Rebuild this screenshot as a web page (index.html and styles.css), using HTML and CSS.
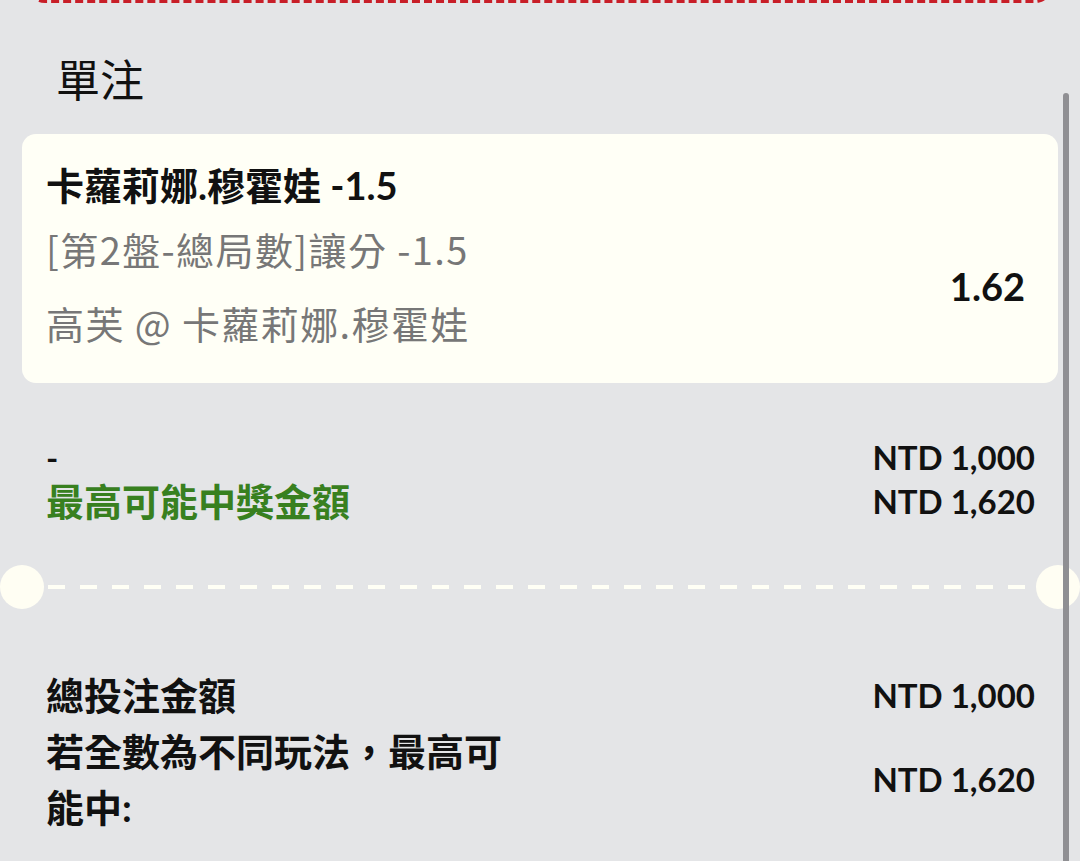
FILE: index.html
```html
<!DOCTYPE html>
<html lang="zh-Hant">
<head>
  <meta charset="UTF-8" />
  <meta name="viewport" content="width=device-width, initial-scale=1.0"/>
  <title>單注</title>
  <link rel="stylesheet" href="styles.css">
</head>
<body>
  <div class="prev-slip"></div>

  <h2 class="section-title">單注</h2>

  <div class="bet-card">
    <div class="bet-name">卡蘿莉娜.穆霍娃 -1.5</div>
    <div class="bet-body">
      <div class="bet-info">
        <div class="bet-market">[第2盤-總局數]讓分 -1.5</div>
        <div class="bet-match">高芙 @ 卡蘿莉娜.穆霍娃</div>
      </div>
      <div class="bet-odds">1.62</div>
    </div>
  </div>

  <div class="stake">
    <div class="row">
      <span class="stake-input">-</span>
      <span class="amount">NTD 1,000</span>
    </div>
    <div class="row">
      <span class="win-label">最高可能中獎金額</span>
      <span class="amount">NTD 1,620</span>
    </div>
  </div>

  <div class="divider">
    <span class="notch"></span>
    <span class="dash-line"></span>
    <span class="notch"></span>
  </div>

  <div class="summary">
    <div class="sum-label">總投注金額</div>
    <div class="amount">NTD 1,000</div>
    <div class="sum-label">若全數為不同玩法，最高可能中:</div>
    <div class="amount">NTD 1,620</div>
  </div>

  <div class="scrollbar"></div>
</body>
</html>
```

FILE: styles.css
```css
body {
  font-family: 'Lato', 'Noto Sans CJK TC', sans-serif;
  background-color: #e4e5e7;
  color: #111;
  margin: 0;
  padding: 0;
  overflow: hidden;
}

.prev-slip {
  height: 36px;
  margin: -37px 27px 0;
  border: 4px dashed #c81e28;
  border-top: none;
  border-radius: 0 0 18px 18px;
}

.section-title {
  font-family: 'Noto Sans CJK TC', sans-serif;
  font-size: 44px;
  font-weight: 400;
  line-height: 56px;
  margin: 47px 0 28px;
  padding-left: 56px;
}

.bet-card {
  margin: 0 22px;
  padding: 25px 33px 34px 24px;
  background-color: #fffff6;
  border-radius: 14px;
}

.bet-name {
  font-size: 38px;
  font-weight: bold;
  line-height: 52px;
  margin-bottom: 12px;
}

.bet-body {
  display: flex;
  align-items: center;
  justify-content: space-between;
}

.bet-market, .bet-match {
  font-family: 'Noto Sans CJK TC', sans-serif;
  font-size: 38px;
  line-height: 52px;
  letter-spacing: 1.4px;
  color: #777;
}

.bet-market {
  margin-bottom: 22px;
}

.bet-odds {
  font-size: 38px;
  font-weight: bold;
}

.stake {
  margin-top: 52px;
  padding: 0 45px 0 46px;
}

.row {
  display: flex;
  justify-content: space-between;
  align-items: center;
  line-height: 44px;
}

.stake-input {
  font-size: 33px;
  font-weight: bold;
}

.win-label {
  font-size: 38px;
  font-weight: bold;
  color: #38801f;
}

.amount {
  font-size: 33px;
  font-weight: bold;
}

.divider {
  display: flex;
  align-items: center;
  margin-top: 42px;
}

.notch {
  width: 44px;
  height: 44px;
  border-radius: 50%;
  background-color: #fffef3;
  flex-shrink: 0;
}

.dash-line {
  flex: 1;
  height: 4px;
  margin: 0 4px;
  background: repeating-linear-gradient(90deg, #fffff5 0 17px, transparent 17px 32px);
}

.summary {
  display: grid;
  grid-template-columns: 1fr auto;
  align-items: center;
  margin-top: 58px;
  padding: 0 45px 0 46px;
}

.sum-label {
  max-width: 470px;
  font-size: 38px;
  font-weight: bold;
  line-height: 56px;
}

.scrollbar {
  position: fixed;
  top: 93px;
  bottom: 0;
  right: 11px;
  width: 6px;
  border-radius: 3px 3px 0 0;
  background-color: #8f8f93;
}
```
